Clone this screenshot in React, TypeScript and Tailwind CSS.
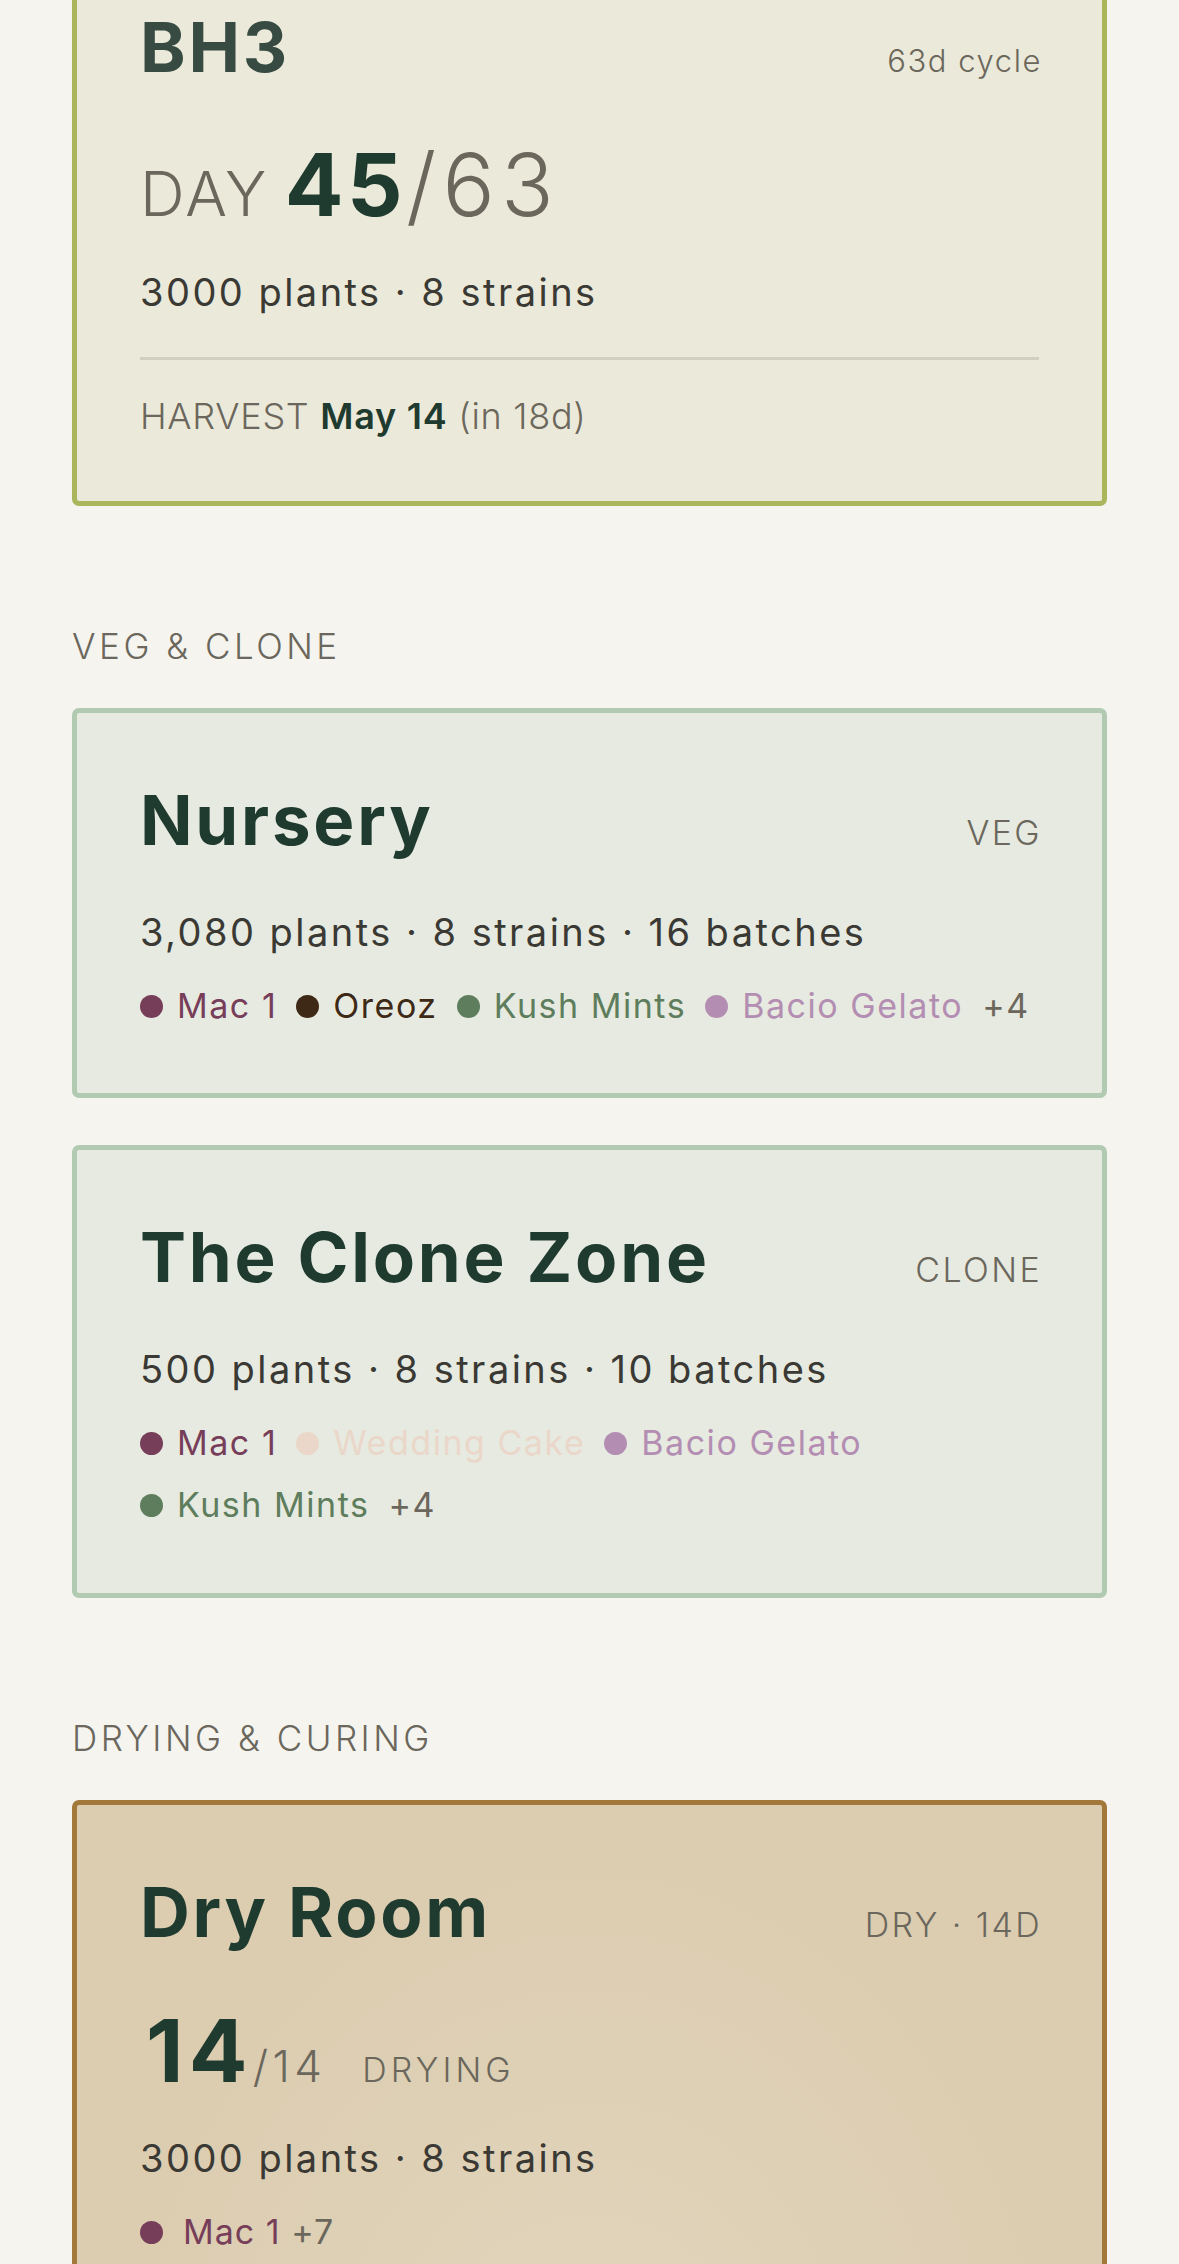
type Strain = { name: string; dot: string; text: string };

const STRAINS: Record<string, Strain> = {
  mac1: { name: 'Mac 1', dot: 'bg-[#773e5a]', text: 'text-[#773e5a]' },
  oreoz: { name: 'Oreoz', dot: 'bg-[#3d2915]', text: 'text-[#3d2915]' },
  kush: { name: 'Kush Mints', dot: 'bg-[#5e7d5d]', text: 'text-[#5e7d5d]' },
  bacio: { name: 'Bacio Gelato', dot: 'bg-[#b38eb2]', text: 'text-[#b38eb2]' },
  wedding: { name: 'Wedding Cake', dot: 'bg-[#ead7ca]', text: 'text-[#ead7ca]' },
};

function Dot({ className }: { className: string }) {
  return <span className={`inline-block h-[23px] w-[23px] shrink-0 rounded-full ${className}`} />;
}

function StrainList({ ids, more }: { ids: string[]; more: number }) {
  return (
    <div className="mt-[38px] flex flex-wrap items-center gap-x-[19px] gap-y-[28px] text-[34px] leading-none tracking-[0.045em]">
      {ids.map((id) => {
        const s = STRAINS[id];
        return (
          <span key={id} className="flex items-center gap-[14px]">
            <Dot className={s.dot} />
            <span className={s.text}>{s.name}</span>
          </span>
        );
      })}
      <span className="text-[#6b675c]">+{more}</span>
    </div>
  );
}

function CardHead({ title, tag, dim, lower }: { title: string; tag: string; dim?: boolean; lower?: boolean }) {
  return (
    <div className="flex items-baseline justify-between">
      <h2
        className={`text-[69px] font-bold leading-none tracking-[0.04em] ${dim ? 'text-[#384b42]' : 'text-[#1f3a2e]'}`}
      >
        {title}
      </h2>
      <span
        className={`-mr-[3px] font-light leading-none text-[#6b675c] ${
          lower ? 'text-[31px] tracking-[0.05em]' : 'text-[34px] tracking-[0.07em]'
        }`}
      >
        {tag}
      </span>
    </div>
  );
}

function Stats({ children }: { children: string }) {
  return <p className="text-[38px] leading-none tracking-[0.065em] text-[#3a3934]">{children}</p>;
}

function SectionLabel({ children }: { children: string }) {
  return (
    <h3 className="mb-[44px] mt-[123px] text-[35px] font-light leading-none tracking-[0.1em] text-[#6b675c]">
      {children}
    </h3>
  );
}

export default function App() {
  return (
    <div className="min-h-screen overflow-hidden bg-[#f5f4ef] px-[72px] pb-[80px] font-['Inter','Noto_Sans',sans-serif]">
      {/* flowering room, scrolled partly out of view */}
      <section className="-mt-[65px] rounded-[7px] border-[5px] border-[#a9b65b] bg-[#ebeada] px-[63px] pb-[67px] pt-[73px]">
        <CardHead title="BH3" tag="63d cycle" dim lower />
        <div className="mt-[59px] flex items-baseline leading-none">
          <span className="mr-[16px] text-[62px] font-light tracking-[0.04em] text-[#6b675c]">DAY</span>
          <span className="text-[87px] font-bold tracking-[0.04em] text-[#1f3a2e]">45</span>
          <span className="text-[87px] font-light tracking-[0.07em] text-[#6b675c]">/63</span>
        </div>
        <div className="mt-[45px]">
          <Stats>3000 plants · 8 strains</Stats>
        </div>
        <div className="mt-[46px] h-[3px] bg-[#cfd0bf]" />
        <p className="mt-[38px] text-[36px] leading-none tracking-[0.02em] text-[#6b675c]">
          <span className="font-light">HARVEST </span>
          <span className="font-semibold text-[#1f3a2e]">May 14</span>
          <span className="font-light"> (in 18d)</span>
        </p>
      </section>

      <SectionLabel>VEG &amp; CLONE</SectionLabel>
      <div className="flex flex-col gap-[47px]">
        <section className="rounded-[7px] border-[5px] border-[#b2cab2] bg-[#e7eae0] px-[63px] pb-[70px] pt-[73px]">
          <CardHead title="Nursery" tag="VEG" />
          <div className="mt-[58px]">
            <Stats>3,080 plants · 8 strains · 16 batches</Stats>
          </div>
          <StrainList ids={['mac1', 'oreoz', 'kush', 'bacio']} more={4} />
        </section>

        <section className="rounded-[7px] border-[5px] border-[#b2cab2] bg-[#e7eae0] px-[63px] pb-[71px] pt-[73px]">
          <CardHead title="The Clone Zone" tag="CLONE" />
          <div className="mt-[58px]">
            <Stats>500 plants · 8 strains · 10 batches</Stats>
          </div>
          <StrainList ids={['mac1', 'wedding', 'bacio', 'kush']} more={4} />
        </section>
      </div>

      <SectionLabel>DRYING &amp; CURING</SectionLabel>
      <section className="rounded-[7px] border-[5px] border-[#a3793b] bg-[radial-gradient(ellipse_at_50%_100%,#e2d6bd,#dccdb1_65%)] px-[63px] pb-[67px] pt-[73px]">
        <CardHead title="Dry Room" tag="DRY · 14D" />
        <div className="mt-[60px] flex items-baseline leading-none">
          <span className="ml-[6px] text-[87px] font-bold tracking-[0.06em] text-[#1f3a2e]">14</span>
          <span className="text-[44px] font-light tracking-[0.1em] text-[#6b675c]">/14</span>
          <span className="ml-[36px] text-[34px] font-light tracking-[0.12em] text-[#6b675c]">DRYING</span>
        </div>
        <div className="mt-[45px]">
          <Stats>3000 plants · 8 strains</Stats>
        </div>
        <div className="mt-[38px] flex items-center gap-[20px] text-[34px] leading-none tracking-[0.03em]">
          <Dot className="bg-[#773e5a]" />
          <span>
            <span className="text-[#773e5a]">Mac 1</span>
            <span className="text-[#6b675c]"> +7</span>
          </span>
        </div>
        <div className="h-[120px]" />
      </section>
    </div>
  );
}
